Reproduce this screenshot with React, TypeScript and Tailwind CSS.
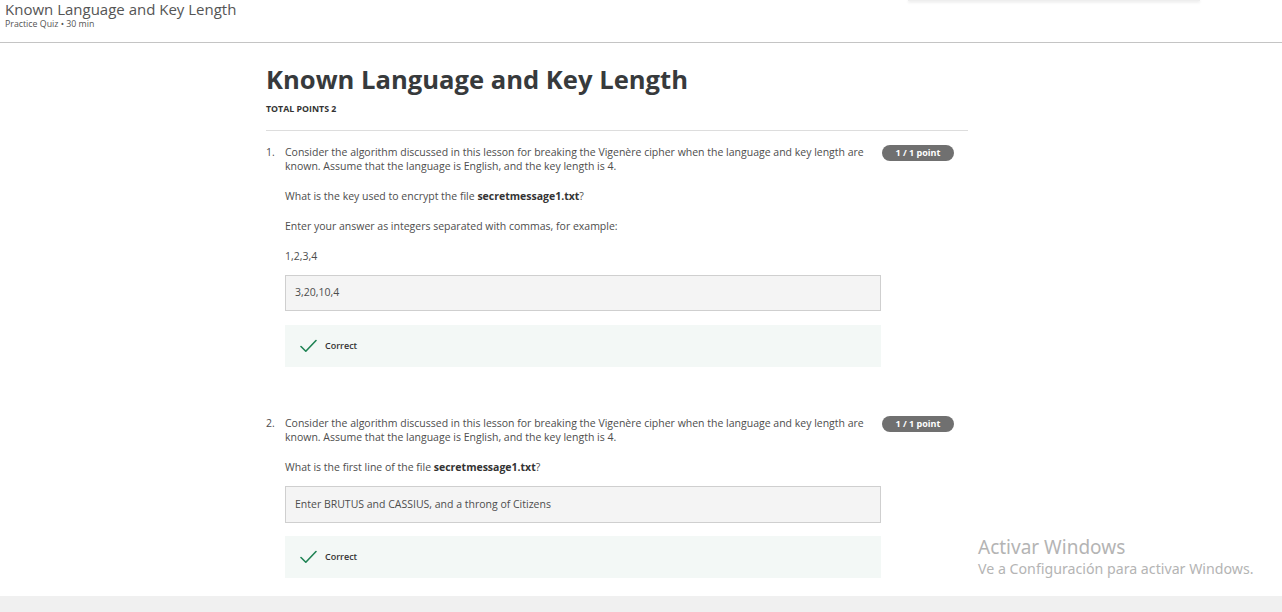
import React from "react";

const Check = () => (
  <svg width="17" height="14" viewBox="0 0 17 14" fill="none">
    <path d="M1 7.5 L5.8 12.2 L16 1.5" stroke="#1f8354" strokeWidth="1.6" strokeLinecap="round" strokeLinejoin="round" />
  </svg>
);

const Badge = () => (
  <div className="h-[16px] w-[72px] rounded-full bg-[#707070] text-white text-[9px] font-bold flex items-center justify-center shrink-0">
    1 / 1 point
  </div>
);

const Correct = () => (
  <div className="h-[42px] bg-[#f3f8f6] flex items-center pl-[15px] gap-[8px]">
    <Check />
    <span className="text-[9px] font-semibold text-[#333]">Correct</span>
  </div>
);

const Intro = ({ n }: { n: string }) => (
  <div className="flex">
    <div className="w-[19px] shrink-0 text-[10.5px] leading-[14px]">{n}</div>
    <div className="w-[584px] text-[10.5px] leading-[14px]">
      Consider the algorithm discussed in this lesson for breaking the Vigenère cipher when the language and key length are known. Assume that the language is English, and the key length is 4.
    </div>
    <div className="ml-[13px] mt-[0px]">
      <Badge />
    </div>
  </div>
);

export default function App() {
  return (
    <div className="relative w-[1282px] h-[612px] bg-white overflow-hidden text-[#4d4d4d]" style={{ fontFamily: '"Open Sans", "Noto Sans", sans-serif' }}>
      {/* header */}
      <div className="h-[43px] border-b border-[#c4c4c4] flex justify-between">
        <div className="pl-[5px]">
          <div className="text-[15px] leading-[18px] text-[#555] mt-[0px]">Known Language and Key Length</div>
          <div className="text-[8.8px] leading-[11px] text-[#555] mt-[1px]">Practice Quiz • 30 min</div>
        </div>
        <div className="w-[292px] h-[1px] mr-[82px] shadow-[0_1px_3px_rgba(0,0,0,0.18)] bg-[#eee]" />
      </div>

      {/* main */}
      <div className="ml-[266px] w-[702px]">
        <h1 className="mt-[20px] text-[25.6px] leading-[34px] font-bold text-[#373a3c]">Known Language and Key Length</h1>
        <div className="mt-[7px] text-[8.8px] leading-[10px] font-bold text-[#333]">TOTAL POINTS 2</div>
        <div className="mt-[16px] h-px bg-[#ddd]" />

        {/* Q1 */}
        <div className="mt-[14px]">
          <Intro n="1." />
          <div className="ml-[19px] w-[596px]">
            <p className="mt-[16px] text-[10.5px] leading-[14px]">
              What is the key used to encrypt the file <b className="text-[#333]">secretmessage1.txt</b>?
            </p>
            <p className="mt-[16px] text-[10.5px] leading-[14px]">Enter your answer as integers separated with commas, for example:</p>
            <p className="mt-[16px] text-[10.5px] leading-[14px]">1,2,3,4</p>
            <div className="mt-[12px] h-[36px] bg-[#f4f4f4] border border-[#cfcfcf] flex items-center pl-[9px] text-[10.5px]">3,20,10,4</div>
            <div className="mt-[14px]">
              <Correct />
            </div>
          </div>
        </div>

        {/* Q2 */}
        <div className="mt-[49px]">
          <Intro n="2." />
          <div className="ml-[19px] w-[596px]">
            <p className="mt-[16px] text-[10.5px] leading-[14px]">
              What is the first line of the file <b className="text-[#333]">secretmessage1.txt</b>?
            </p>
            <div className="mt-[12px] h-[37px] bg-[#f4f4f4] border border-[#cfcfcf] flex items-center pl-[9px] text-[10.5px]">Enter BRUTUS and CASSIUS, and a throng of Citizens</div>
            <div className="mt-[13px]">
              <Correct />
            </div>
          </div>
        </div>
      </div>

      {/* bottom bar */}
      <div className="absolute left-0 right-0 bottom-0 h-[16px] bg-[#f0f0f0]" />

      {/* watermark */}
      <div className="absolute left-[978px] top-[535px] text-[#b4b4b4] pointer-events-none" style={{ fontFamily: '"Noto Sans", "Open Sans", sans-serif' }}>
        <div className="text-[19px] leading-[24px]">Activar Windows</div>
        <div className="text-[14.2px] leading-[18px] mt-[1px]">Ve a Configuración para activar Windows.</div>
      </div>
    </div>
  );
}
